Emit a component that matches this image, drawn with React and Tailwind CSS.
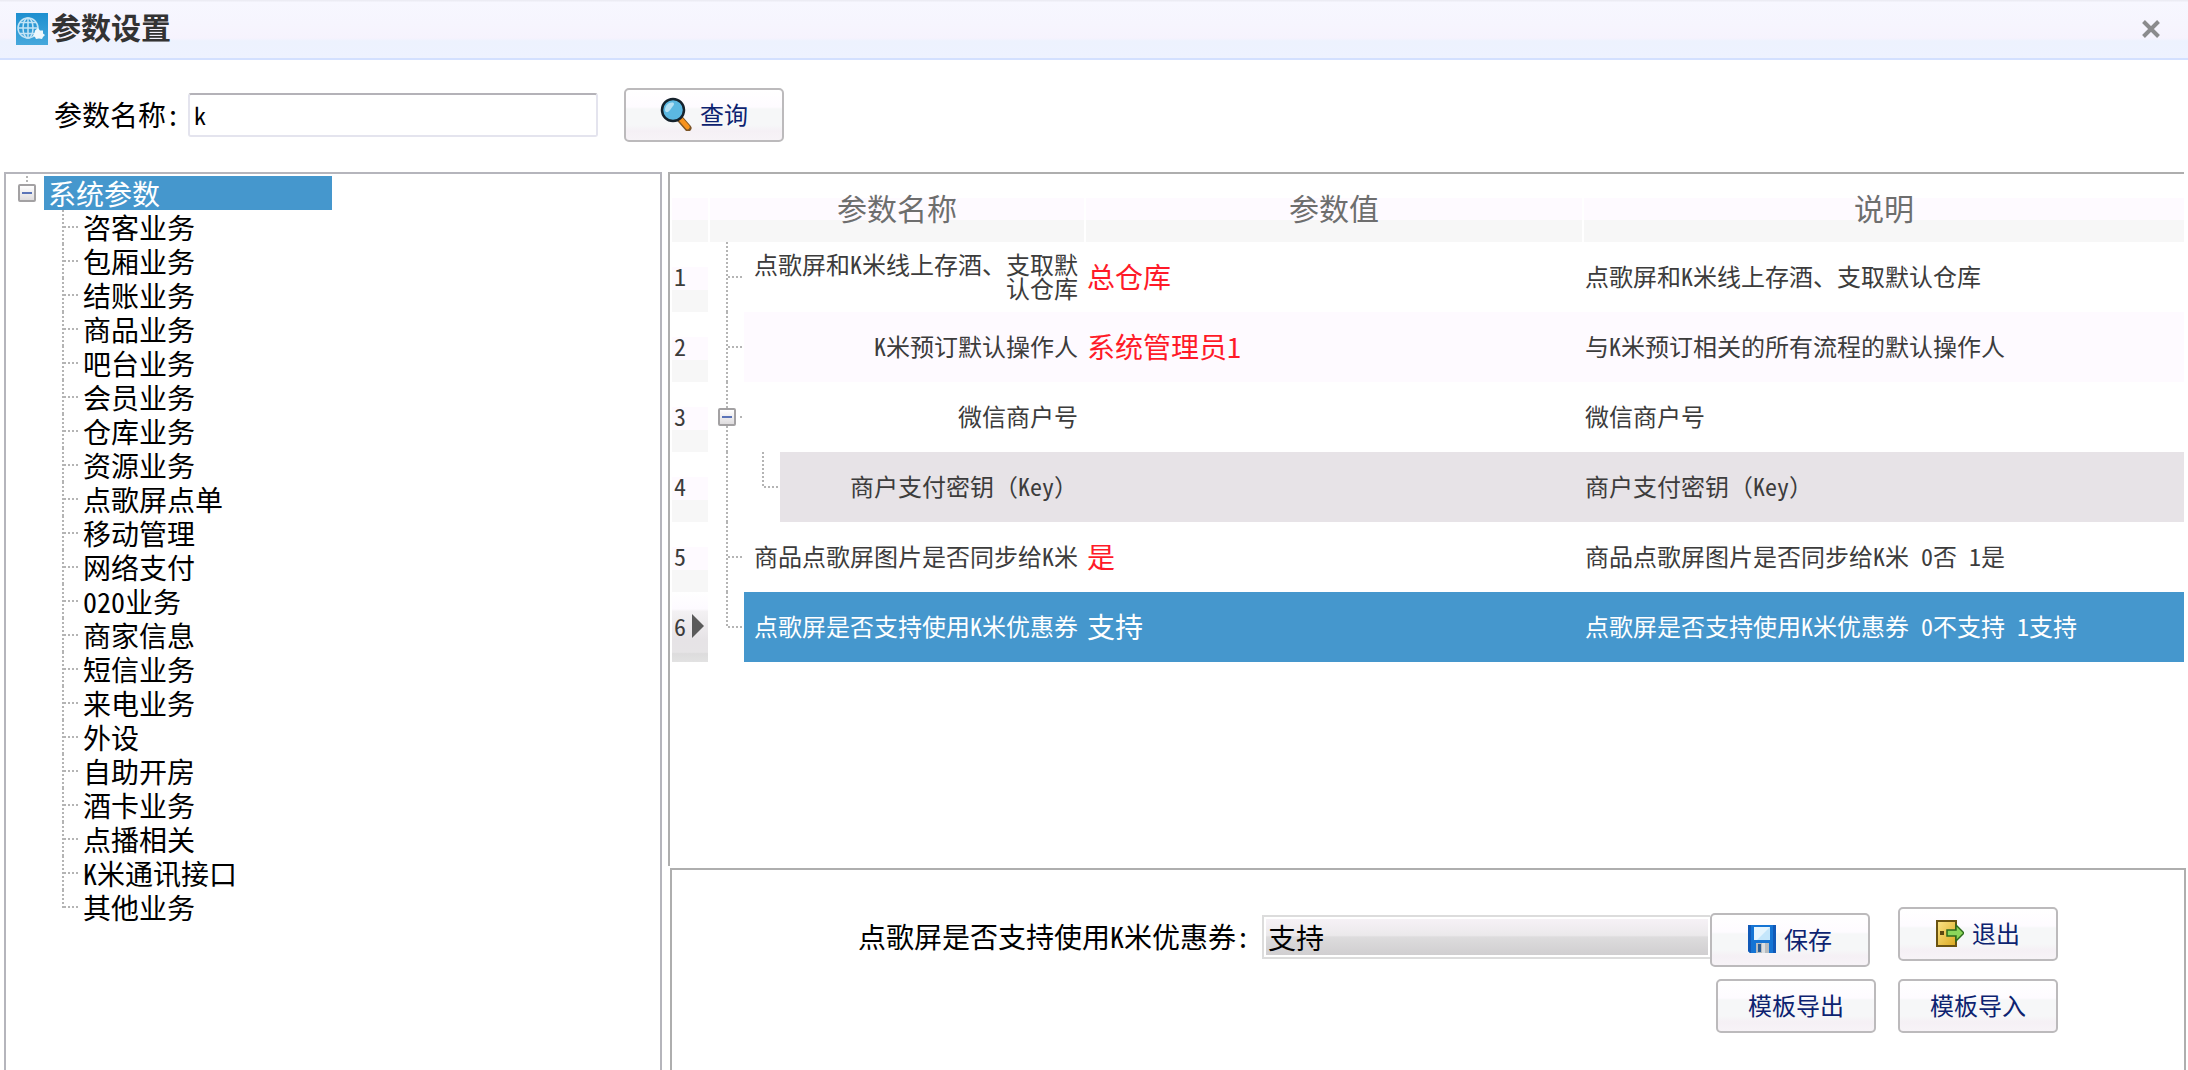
import { useState } from 'react';
import clsx from 'clsx';

const treeItems = [
  '咨客业务',
  '包厢业务',
  '结账业务',
  '商品业务',
  '吧台业务',
  '会员业务',
  '仓库业务',
  '资源业务',
  '点歌屏点单',
  '移动管理',
  '网络支付',
  '020业务',
  '商家信息',
  '短信业务',
  '来电业务',
  '外设',
  '自助开房',
  '酒卡业务',
  '点播相关',
  'K米通讯接口',
  '其他业务'
];

const rows = [
  { id: 1, name: '点歌屏和K米线上存酒、支取默认仓库', value: '总仓库', desc: '点歌屏和K米线上存酒、支取默认仓库' },
  { id: 2, name: 'K米预订默认操作人', value: '系统管理员1', desc: '与K米预订相关的所有流程的默认操作人' },
  { id: 3, name: '微信商户号', value: '', desc: '微信商户号', parent: true },
  { id: 4, name: '商户支付密钥（Key）', value: '', desc: '商户支付密钥（Key）', child: true },
  { id: 5, name: '商品点歌屏图片是否同步给K米', value: '是', desc: '商品点歌屏图片是否同步给K米 0否 1是' },
  { id: 6, name: '点歌屏是否支持使用K米优惠券', value: '支持', desc: '点歌屏是否支持使用K米优惠券 0不支持 1支持', last: true }
];

const rowColors = {
  2: 'bg-[#fefaff]',
  4: 'bg-[#e7e3e7]',
  6: 'bg-[#4597cd] text-white'
};

const vDots = 'w-[2px] bg-[repeating-linear-gradient(to_bottom,#b4b4b4_0_2px,transparent_2px_4px)]';
const hDots = 'h-[2px] bg-[repeating-linear-gradient(to_right,#b4b4b4_0_2px,transparent_2px_4px)]';

const Toggle = () => (
  <button
    type="button"
    aria-label="折叠"
    className="flex h-[18px] w-[18px] shrink-0 items-center justify-center rounded-[2px] border-2 border-[#a3a1a3] bg-linear-to-b from-white to-[#dedcde]"
  >
    <span className="h-[2px] w-[10px] bg-[#5b74b8]" />
  </button>
);

const LogoIcon = () => (
  <svg viewBox="0 0 32 32" className="h-8 w-8 shrink-0" aria-hidden="true">
    <defs>
      <linearGradient id="logoBg" x1="0" y1="0" x2="0" y2="1">
        <stop offset="0" stopColor="#1d8fd0" />
        <stop offset="1" stopColor="#46a8dc" />
      </linearGradient>
    </defs>
    <rect width="32" height="32" fill="url(#logoBg)" />
    <g fill="none" stroke="#c3e4f5" strokeWidth="1.5">
      <circle cx="12" cy="15" r="10" />
      <ellipse cx="12" cy="15" rx="5" ry="10" />
      <path d="M12 5v20M2 15h20M4 9.500h16M4 20.500h16" />
    </g>
    <path d="M22 15l2 2.500h3v3l2 1.500-2 2-1 2-3-.5-3 .5-1-2-2-1.500 1.500-2.500.5-2.500z" fill="#eef7fc" />
  </svg>
);

const SearchIcon = () => (
  <svg viewBox="0 0 32 34" className="h-[34px] w-8 shrink-0" aria-hidden="true">
    <path d="M21 23l7 8" stroke="#7d5526" strokeWidth="7" strokeLinecap="round" />
    <path d="M20.500 22l7 8" stroke="#f7931e" strokeWidth="4.500" strokeLinecap="round" />
    <circle cx="13" cy="13" r="11" fill="#5bb8e2" stroke="#15222c" strokeWidth="2.500" />
    <path d="M5 13c0-4 3-7.500 7-7.500 2.500 0 2.500 2 1 3.500s-3 5-5 6c-2 .5-3-.5-3-2z" fill="#b4e0f4" />
  </svg>
);

const SaveIcon = () => (
  <svg viewBox="0 0 28 28" className="h-7 w-7 shrink-0" aria-hidden="true">
    <path d="M0 0h28v28H2l-2-2z" fill="#1574d4" />
    <path d="M0 0h3v28H2l-2-2zM25 0h3v28h-3z" fill="#1159b8" />
    <path d="M6 2h16v13H6z" fill="#e6f5fe" />
    <path d="M22 2v13H9z" fill="#c4e6fb" />
    <path d="M8 18h13v10H8z" fill="#b7bcc0" />
    <path d="M10 19h3v8h-3z" fill="#2b5e96" />
    <path d="M14 18h3v10h-3z" fill="#dcdfe1" />
  </svg>
);

const ExitIcon = () => (
  <svg viewBox="0 0 28 28" className="h-7 w-7 shrink-0" aria-hidden="true">
    <defs>
      <linearGradient id="door" x1="0" y1="0" x2="1" y2="1">
        <stop offset="0" stopColor="#fbe487" />
        <stop offset="1" stopColor="#dba920" />
      </linearGradient>
    </defs>
    <path d="M1 2h19v25H1z" fill="url(#door)" stroke="#6a5312" strokeWidth="2" />
    <path d="M4 12h4v4H4z" fill="#5c4710" />
    <path d="M11 11h9V6l8 8-8 8v-5h-9z" fill="#8bd65a" stroke="#2c6b1c" strokeWidth="1.500" />
  </svg>
);

const ToolButton = ({ icon, children }) => (
  <button
    type="button"
    className="flex h-[54px] w-40 shrink-0 items-center justify-center gap-2 rounded-[5px] border-2 border-[#bcbabc] bg-[linear-gradient(to_bottom,#ffffff_0%,#fefbff_34%,#f6f7f8_38%,#f6f7f8_70%,#f5f0f5_82%,#f7f3f7_100%)] pb-[2px] text-[24px] leading-[28px] text-[#0d2370]"
  >
    {icon}
    {children}
  </button>
);

const SideTree = () => (
  <nav className="w-[31%] max-w-[658px] shrink-0 border-2 border-b-0 border-[#b5b5bc] pt-[2px] pl-3 text-[28px] leading-[34px] text-black">
    <div className="flex items-center">
      <span className="flex h-[34px] w-[26px] flex-col">
        <span className={clsx(vDots, 'ml-2 flex-1')} />
        <Toggle />
        <span className="flex-1" />
      </span>
      <a href="#root" className="w-[288px] bg-[#4597cd] pl-1 text-white">系统参数</a>
    </div>
    <ul>
      {treeItems.map((item, i) => (
        <li key={item} className="flex h-[34px] items-center pl-11">
          <span className={clsx(vDots, 'self-start', i === treeItems.length - 1 ? 'h-[18px]' : 'h-full')} />
          <span className={clsx(hDots, 'mr-[3px] w-4')} />
          <a href={`#${i}`}>{item}</a>
        </li>
      ))}
    </ul>
  </nav>
);

// Tree lines in front of the parameter name
const Gutter = ({ row }) => {
  if (row.parent) {
    return (
      <span className="flex h-[70px] w-9 shrink-0 items-center pl-[10px]">
        <span className="flex h-full flex-col items-center">
          <span className={clsx(vDots, 'flex-1')} />
          <Toggle />
          <span className={clsx(vDots, 'flex-1')} />
        </span>
        <span className={clsx(hDots, 'ml-1 w-[2px]')} />
      </span>
    );
  }
  if (row.child) {
    return (
      <span className="flex h-[70px] w-[72px] shrink-0 items-center pl-[18px]">
        <span className={clsx(vDots, 'h-full')} />
        <span className={clsx(vDots, 'ml-[34px] h-9 self-start')} />
        <span className={clsx(hDots, 'flex-1')} />
      </span>
    );
  }
  return (
    <span className="flex h-[70px] w-9 shrink-0 items-center pl-[18px]">
      <span className={clsx(vDots, row.last ? 'h-9 self-start' : 'h-full')} />
      <span className={clsx(hDots, 'flex-1')} />
    </span>
  );
};

const stripes = 'bg-[linear-gradient(to_bottom,#ffffff_0_36%,#fefaff_36%_68%,#f7f7f7_68%_100%)]';
const activeStripes = 'bg-[linear-gradient(to_bottom,#ffffff_0%,#fdfaff_24%,#f3f1f3_28%,#e6e3e6_68%,#e6e4e6_86%,#dddcdd_88%,#e2e2e2_100%)]';

const ParamTable = ({ selected, onSelect }) => (
  <table className="w-full table-fixed border-collapse text-[24px] leading-[24px] text-[#3c3c3c]">
    <colgroup>
      <col className="w-[38px]" />
      <col className="w-[376px]" />
      <col className="w-[498px]" />
      <col />
    </colgroup>
    <thead>
      <tr className="h-[68px] text-[30px] text-[#6e6e6e]">
        {['', '参数名称', '参数值', '说明'].map((title) => (
          <th key={title} className="p-0 pl-[2px] font-normal">
            <div className={clsx('flex h-[68px] items-center justify-center pb-[2px]', stripes)}>{title}</div>
          </th>
        ))}
      </tr>
    </thead>
    <tbody>
      {rows.map((row) => {
        const active = row.id === selected;
        return (
          <tr key={row.id} className="h-[70px]" onClick={() => onSelect(row.id)}>
            <td className="p-0 pl-[2px]">
              <div className={clsx('flex h-[70px] items-center gap-[6px] pb-[2px] pl-[2px]', active ? activeStripes : stripes)}>
                {row.id}
                {active && (
                  <svg viewBox="0 0 12 24" className="h-6 w-3" aria-hidden="true">
                    <path d="M0 0l12 12L0 24z" fill="#5a5a5a" />
                  </svg>
                )}
              </div>
            </td>
            <td className="p-0">
              <div className="flex h-[70px]">
                <Gutter row={row} />
                <div className={clsx('flex flex-1 items-center justify-end pr-[6px] pb-[2px] text-right', rowColors[row.id])}>
                  {row.name}
                </div>
              </div>
            </td>
            <td className={clsx('p-0 pb-[2px] pl-[3px] text-[28px]', rowColors[row.id], !active && 'text-[#ff1a28]')}>{row.value}</td>
            <td className={clsx('p-0 pb-[2px] pl-[3px]', rowColors[row.id])}>{row.desc}</td>
          </tr>
        );
      })}
    </tbody>
  </table>
);

const App = () => {
  const [keyword, setKeyword] = useState('k');
  const [selected, setSelected] = useState(6);

  return (
    <div className="flex min-h-screen flex-col bg-white font-['Noto_Sans_Mono_CJK_SC','Liberation_Mono','Noto_Sans_CJK_SC',monospace] text-black">
      <header className="flex h-[60px] items-center justify-between border-b-2 border-[#d3e0ff] bg-[linear-gradient(to_bottom,#ececf4_0_1px,#f7f7ff_2px,#f6f5fe_24px,#f6f3fd_38px,#edf2fe_41px,#eef2ff_58px)] pr-7 pl-4">
        <div className="flex items-start gap-[3px]">
          <LogoIcon />
          <h1 className="text-[30px] leading-[26px] font-bold text-[#333333]">参数设置</h1>
        </div>
        <button type="button" aria-label="关闭">
          <svg viewBox="0 0 18 18" className="h-[18px] w-[18px]" aria-hidden="true">
            <path d="M1.500 1.500l15 15M16.500 1.500l-15 15" stroke="#8b8b8d" strokeWidth="4" />
          </svg>
        </button>
      </header>

      <form className="flex h-[112px] items-center pb-[2px] pl-[54px] text-[28px] leading-[34px]" onSubmit={(e) => e.preventDefault()}>
        <label htmlFor="keyword" className="mr-2 w-[126px] pb-[2px] whitespace-nowrap">参数名称:</label>
        <input
          id="keyword"
          value={keyword}
          onChange={(e) => setKeyword(e.target.value)}
          className="mr-[26px] h-11 w-[410px] rounded-[3px] border-2 border-[#e4e4ee] border-t-[#b4b2b8] bg-white px-1 pb-[2px] text-[24px]"
        />
        <ToolButton icon={<SearchIcon />}>查询</ToolButton>
      </form>

      <main className="flex flex-1 gap-[6px] pr-[2px] pl-1">
        <SideTree />
        <div className="flex min-w-0 flex-1 flex-col">
          <section className="mr-[2px] flex-1 border-t-2 border-l-2 border-[#aeaeae]">
            <ParamTable selected={selected} onSelect={setSelected} />
          </section>
          <section className="mt-[2px] ml-[2px] flex h-[202px] items-end justify-end gap-[22px] border-2 border-b-0 border-[#aeaeae] pr-[126px] pb-[37px]">
            <div className="flex flex-col items-end gap-3">
              <div className="flex items-start pr-[6px]">
                <div className="flex items-center pt-[2px]">
                  <label htmlFor="param" className="mr-3 pb-[2px] text-[28px] leading-[34px] whitespace-nowrap">点歌屏是否支持使用K米优惠券:</label>
                  <select
                    id="param"
                    className="h-11 w-[448px] appearance-none border-2 border-r-0 border-[#dcdcdc] bg-[linear-gradient(to_bottom,#f7f2f7_0%,#ebe9eb_46%,#dddcdd_50%,#cfcdcf_100%)] pl-1 text-[28px] leading-[34px] shadow-[inset_0_0_0_2px_#ffffff]"
                  >
                    <option>支持</option>
                    <option>不支持</option>
                  </select>
                </div>
                <ToolButton icon={<SaveIcon />}>保存</ToolButton>
              </div>
              <ToolButton>模板导出</ToolButton>
            </div>
            <div className="flex flex-col gap-[18px]">
              <ToolButton icon={<ExitIcon />}>退出</ToolButton>
              <ToolButton>模板导入</ToolButton>
            </div>
          </section>
        </div>
      </main>
    </div>
  );
};

export default App;
